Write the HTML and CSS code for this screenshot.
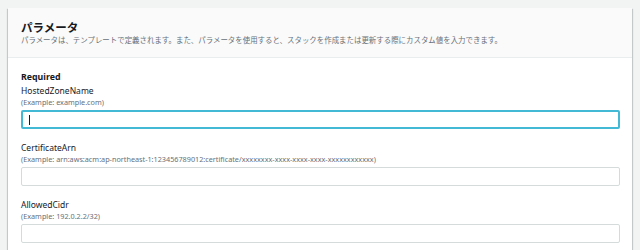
FILE: index.html
```html
<!DOCTYPE html>
<html lang="ja">
<head>
<meta charset="utf-8">
<title>パラメータ</title>
<link rel="stylesheet" href="styles.css">
</head>
<body>
<div class="card">
  <div class="card-header">
    <h2 class="title">パラメータ</h2>
    <p class="subtitle">パラメータは、テンプレートで定義されます。また、パラメータを使用すると、スタックを作成または更新する際にカスタム値を入力できます。</p>
  </div>
  <div class="card-body">
    <h3 class="group">Required</h3>
    <div class="field">
      <label class="label">HostedZoneName</label>
      <div class="hint">(Example: example.com)</div>
      <div class="input focused"><span class="caret"></span></div>
    </div>
    <div class="field">
      <label class="label">CertificateArn</label>
      <div class="hint">(Example: arn:aws:acm:ap-northeast-1:123456789012:certificate/xxxxxxxx-xxxx-xxxx-xxxx-xxxxxxxxxxxx)</div>
      <div class="input"></div>
    </div>
    <div class="field">
      <label class="label">AllowedCidr</label>
      <div class="hint">(Example: 192.0.2.2/32)</div>
      <div class="input"></div>
    </div>
  </div>
</div>
</body>
</html>
```
FILE: styles.css
```css
html, body {
  margin: 0;
  padding: 0;
}
body {
  background: #f2f3f3;
  font-family: "Noto Sans", "Noto Sans CJK JP", sans-serif;
  color: #16191f;
  padding: 8px 8px 0 8px;
  height: 250px;
  box-sizing: border-box;
  overflow: hidden;
}
.card {
  width: 624px;
  height: 242px;
  background: #ffffff;
  box-shadow: 0 1px 1px 0 rgba(0, 28, 36, 0.3), 1px 1px 1px 0 rgba(0, 28, 36, 0.15), -1px 1px 1px 0 rgba(0, 28, 36, 0.15);
  overflow: hidden;
}
.card-header {
  background: #fafafa;
  padding: 12px 13px 12px 13px;
  border-bottom: 1px solid #eaeded;
}
.title {
  margin: 0;
  font-family: "Noto Sans CJK JP", sans-serif;
  font-size: 11.5px;
  line-height: 14px;
  font-weight: 700;
  color: #16191f;
}
.subtitle {
  margin: 0;
  font-family: "Noto Sans CJK JP", sans-serif;
  font-size: 7.45px;
  line-height: 11px;
  color: #687078;
}
.card-body {
  padding: 13px 12px 0 13px;
}
.group {
  margin: 0 0 2px 0;
  font-size: 8.8px;
  line-height: 12px;
  font-weight: 700;
}
.field {
  margin-bottom: 13px;
}
.label {
  display: block;
  font-size: 8.5px;
  line-height: 12px;
  color: #16191f;
}
.hint {
  font-size: 7.25px;
  line-height: 10px;
  color: #687078;
}
.input {
  margin-top: 3px;
  height: 19px;
  box-sizing: border-box;
  border: 1px solid #d5dbdb;
  border-radius: 2px;
  background: #fff;
  display: flex;
  align-items: center;
  padding-left: 7px;
}
.input.focused {
  border: 2px solid #44b9d6;
  padding-left: 6px;
}
.caret {
  width: 1px;
  height: 10px;
  background: #16191f;
}
```
